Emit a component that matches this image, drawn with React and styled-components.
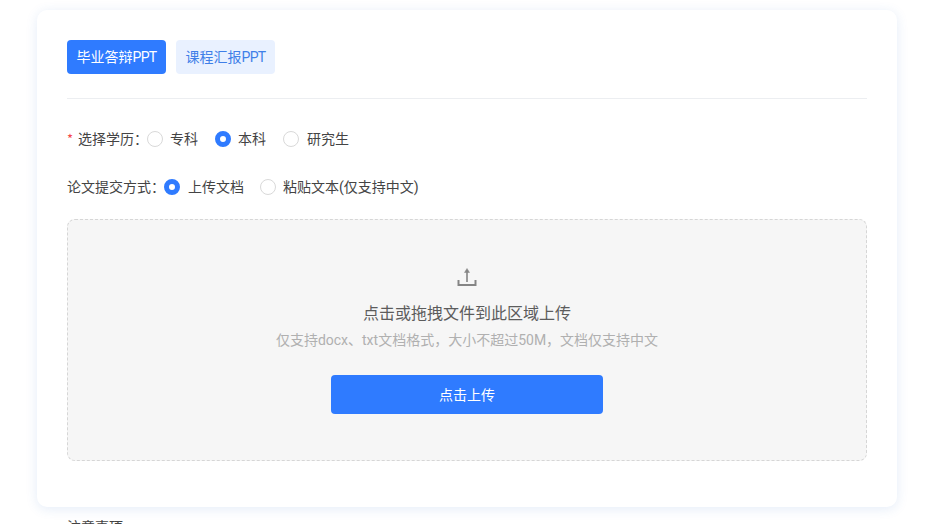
import React from "react";
import styled, { createGlobalStyle } from "styled-components";

const FONT = `Roboto, "Noto Sans CJK SC", sans-serif`;

const Global = createGlobalStyle`
  html, body { margin: 0; padding: 0; background: #fff; height: 524px; overflow: hidden; }
  body { font-family: ${FONT}; }
`;
const Page = styled.div`
  padding: 10px 34px 0 37px;
  box-sizing: border-box;
  width: 931px;
`;
const Card = styled.section`
  box-sizing: border-box;
  width: 860px;
  height: 497px;
  padding: 30px;
  background: #fff;
  border-radius: 10px;
  box-shadow: 0 2px 12px rgba(50, 110, 200, 0.13);
`;
const Tabs = styled.div`
  display: flex;
  gap: 10px;
  padding-bottom: 24px;
  border-bottom: 1px solid #eceef1;
`;
const Tab = styled.button`
  width: 99px;
  height: 34px;
  padding: 0;
  border: 0;
  border-radius: 4px;
  font: 14px/34px ${FONT};
  color: ${(p) => (p.$active ? "#fff" : "#3f7fe8")};
  background: ${(p) => (p.$active ? "#2f7bff" : "#e9f1ff")};
`;
const Latin = styled.span`
  letter-spacing: -0.7px;
`;
const Row = styled.div`
  display: flex;
  align-items: center;
  height: 20px;
  margin-top: ${(p) => p.$top}px;
  font-size: 14px;
  line-height: 20px;
  color: #444;
`;
const Star = styled.span`
  color: #f5484a;
  margin-right: 5px;
  font: 13px/20px "Noto Sans CJK SC", sans-serif;
`;
const Label = styled.span`
  margin-right: ${(p) => p.$gap ?? 0}px;
`;
const Option = styled.label`
  display: flex;
  align-items: center;
  gap: ${(p) => p.$gap ?? 7}px;
  margin-right: ${(p) => p.$end}px;
`;
const Radio = styled.span`
  box-sizing: border-box;
  width: 16px;
  height: 16px;
  border-radius: 50%;
  background: #fff;
  border: ${(p) => (p.$on ? "5px solid #2f7bff" : "1px solid #d9d9d9")};
`;
const Drop = styled.div`
  box-sizing: border-box;
  height: 242px;
  margin-top: 22px;
  padding-top: 47px;
  display: flex;
  flex-direction: column;
  align-items: center;
  background: #f6f6f6;
  border: 1px dashed #d6d6d6;
  border-radius: 8px;
`;
const Icon = styled.svg`
  display: block;
  width: 22px;
  height: 22px;
`;
const Title = styled.div`
  margin-top: 13px;
  font-size: 16px;
  line-height: 24px;
  color: #5c5c5c;
`;
const Hint = styled.div`
  margin-top: 3px;
  font-size: 14px;
  line-height: 22px;
  color: #b0b0b0;
`;
const Upload = styled.button`
  width: 272px;
  height: 39px;
  margin-top: 24px;
  padding: 0 0 2px;
  border: 0;
  border-radius: 4px;
  background: #2f7bff;
  color: #fff;
  font: 14px ${FONT};
`;
const Note = styled.div`
  margin: 9px 0 0 30px;
  font-size: 14px;
  line-height: 22px;
  color: #444;
`;

export default function App() {
  return (
    <Page>
      <Global />
      <Card>
        <Tabs>
          <Tab $active>毕业答辩<Latin>PPT</Latin></Tab>
          <Tab>课程汇报<Latin>PPT</Latin></Tab>
        </Tabs>
        <Row $top={30}>
          <Star>*</Star>
          <Label $gap={-1}>选择学历：</Label>
          <Option $end={17}><Radio />专科</Option>
          <Option $end={17}><Radio $on />本科</Option>
          <Option $gap={8} $end={0}><Radio />研究生</Option>
        </Row>
        <Row $top={28}>
          <Label $gap={-1}>论文提交方式：</Label>
          <Option $gap={8} $end={16}><Radio $on />上传文档</Option>
          <Option $end={0}><Radio />粘贴文本(仅支持中文)</Option>
        </Row>
        <Drop>
          <Icon viewBox="0 0 22 22" fill="none" stroke="#858585">
            <path d="M2.5 13v5h17v-5" strokeWidth="2" />
            <path d="M11 15V4" strokeWidth="1.6" />
            <path d="M8.5 5.5 11 1.5l2.5 4z" fill="#858585" strokeWidth="0.5" />
          </Icon>
          <Title>点击或拖拽文件到此区域上传</Title>
          <Hint>仅支持docx、txt文档格式，大小不超过50M，文档仅支持中文</Hint>
          <Upload>点击上传</Upload>
        </Drop>
      </Card>
      <Note>注意事项</Note>
    </Page>
  );
}
